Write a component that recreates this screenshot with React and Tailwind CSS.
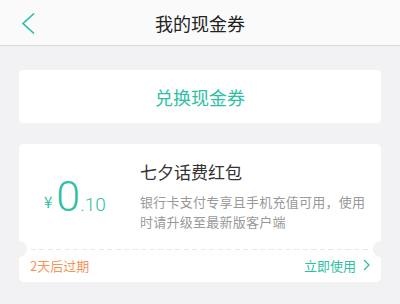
const FONT = '"Noto Sans CJK SC", "Liberation Sans", sans-serif';
const NUM = 'Roboto, "Liberation Sans", sans-serif';

const App = () => {
  return (
    <div
      className="w-[400px] h-[304px] bg-[#f2f2f4] overflow-hidden"
      style={{ fontFamily: FONT }}
    >
      {/* header */}
      <div className="relative h-[46px] bg-[#fafafa] border-b border-[#d9d9d9] flex items-center justify-center">
        <svg
          className="absolute left-[21px] top-[12px]"
          width="14"
          height="23"
          viewBox="0 0 14 23"
          fill="none"
        >
          <path d="M13 1.5 L2 11.5 L13 21.5" stroke="#1cbfa8" strokeWidth="1.6" />
        </svg>
        <h1 className="text-[18px] text-[#222] leading-none">我的现金券</h1>
      </div>

      <div className="px-[19px] pt-[24px]">
        {/* exchange button */}
        <div className="h-[53px] bg-white rounded-[4px] flex items-center justify-center">
          <span className="text-[18px] text-[#2fbfa5] leading-none">兑换现金券</span>
        </div>

        {/* coupon card */}
        <div className="relative mt-[21px] h-[138px] bg-white rounded-[5px] flex flex-col">
          <div className="flex h-[105px]">
            <div className="w-[121px] pl-[25px] pt-[30px] text-[#2fbfa5] whitespace-nowrap">
              <span className="text-[15px] leading-[44px] align-[3px] mr-[4px]">¥</span>
              <span className="text-[43px] leading-[44px] font-light" style={{ fontFamily: NUM }}>0</span>
              <span className="text-[19px] leading-[44px] font-light" style={{ fontFamily: NUM }}>.10</span>
            </div>
            <div className="flex-1 pt-[19px] pr-[10px]">
              <div className="text-[17px] text-[#333] leading-none">七夕话费红包</div>
              <p className="mt-[12px] text-[13px] text-[#999] leading-[20px] tracking-[0.25px]">
                银行卡支付专享且手机充值可用，使用时请升级至最新版客户端
              </p>
            </div>
          </div>
          <div className="mx-[12px] h-px bg-[repeating-linear-gradient(to_right,#e8e8e8_0_5px,transparent_5px_8.5px)]" />
          <div className="flex-1 flex items-center justify-between px-[11px] pb-[2px]">
            <span className="text-[13px] text-[#f7945a] leading-none">2天后过期</span>
            <span className="flex items-center text-[13px] text-[#2fbfa5] leading-none">
              立即使用
              <svg className="ml-[7px]" width="7" height="12" viewBox="0 0 7 12" fill="none">
                <path d="M1 1 L6 6 L1 11" stroke="#2fbfa5" strokeWidth="1.3" />
              </svg>
            </span>
          </div>
          {/* notches */}
          <div className="absolute left-[-8px] top-[97px] w-[16px] h-[16px] rounded-full bg-[#f2f2f4]" />
          <div className="absolute right-[-8px] top-[97px] w-[16px] h-[16px] rounded-full bg-[#f2f2f4]" />
        </div>
      </div>
    </div>
  );
};

export default App;
